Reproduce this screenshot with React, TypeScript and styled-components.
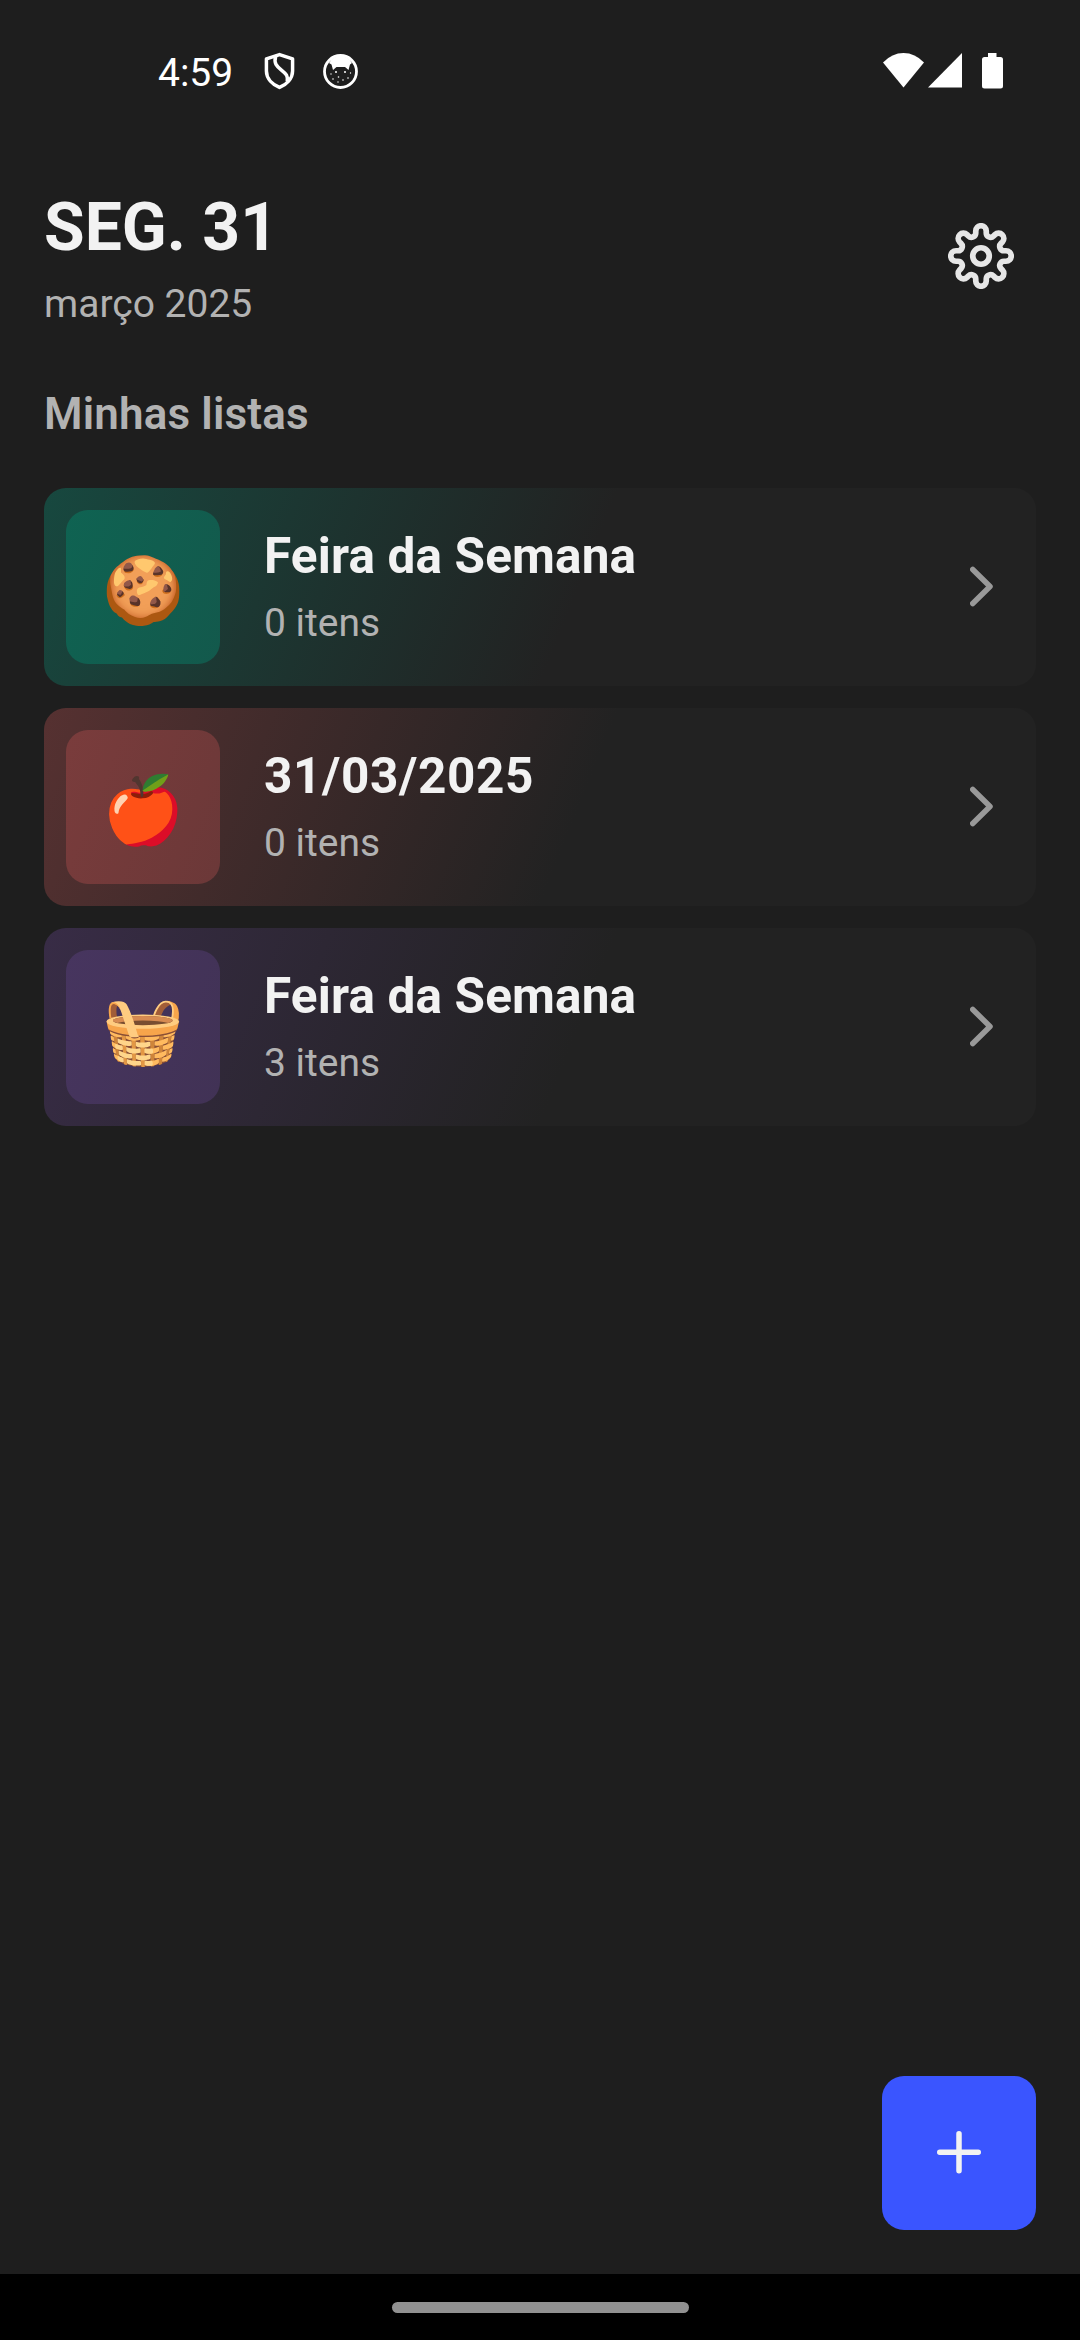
import React from "react";
import styled, { createGlobalStyle } from "styled-components";

const GlobalStyle = createGlobalStyle`
  * { box-sizing: border-box; }
  body { margin: 0; background: #1e1e1e; }
`;

const Screen = styled.div`
  width: 1080px;
  height: 2340px;
  display: flex;
  flex-direction: column;
  background: #1e1e1e;
  color: #f2f2f2;
  font-family: Roboto, "Liberation Sans", sans-serif;
  overflow: hidden;
`;

const StatusBar = styled.div`
  height: 143px;
  padding: 0 76px 2px 158px;
  display: flex;
  align-items: center;
  justify-content: space-between;
  color: #fff;
`;

const StatusGroup = styled.div<{ $gap: number }>`
  display: flex;
  align-items: center;
  gap: ${(p) => p.$gap}px;
`;

const Clock = styled.span`
  font-size: 39px;
  line-height: 45px;
  margin-right: 3px;
  padding-top: 6px;
`;

const BatteryIcon = styled.svg`
  margin-left: 16px;
`;

const Header = styled.header`
  display: flex;
  justify-content: space-between;
  align-items: center;
  padding: 45px 66px 0 44px;
`;

const Day = styled.h1`
  margin: 0;
  font-size: 66px;
  line-height: 80px;
  font-weight: 700;
`;

const Month = styled.p`
  margin: 13px 0 0;
  font-size: 39px;
  line-height: 46px;
  color: #b2b2b2;
`;

const GearIcon = styled.svg`
  margin-bottom: 3px;
`;

const SectionTitle = styled.h2`
  margin: 61px 44px 48px;
  font-size: 44px;
  line-height: 52px;
  font-weight: 600;
  letter-spacing: 0.15px;
  color: #b2b2b2;
`;

const Lists = styled.main`
  flex: 1;
  display: flex;
  flex-direction: column;
  gap: 22px;
  padding: 0 44px;
`;

const Card = styled.article<{ $tint: string }>`
  height: 198px;
  padding: 22px 42px 22px 22px;
  display: flex;
  align-items: center;
  gap: 44px;
  border-radius: 22px;
  background: linear-gradient(111.8deg, ${(p) => p.$tint} 0, #222222 534px);
`;

const Tile = styled.div<{ $from: string; $to: string }>`
  width: 154px;
  height: 154px;
  flex: none;
  display: flex;
  align-items: center;
  justify-content: center;
  border-radius: 22px;
  background: linear-gradient(111.8deg, ${(p) => p.$from}, ${(p) => p.$to});
`;

const Emoji = styled.span`
  padding: 7px 0 0 1px;
  font-size: 66px;
  line-height: 80px;
  font-family: "Noto Color Emoji", Roboto, sans-serif;
`;

const CardText = styled.div`
  flex: 1;
  padding-bottom: 2px;
`;

const Name = styled.h3<{ $spacing: number }>`
  margin: 0;
  font-size: 49.5px;
  line-height: 58px;
  font-weight: 700;
  letter-spacing: ${(p) => p.$spacing}px;
`;

const Count = styled.p`
  margin: 15px 0 0;
  font-size: 39px;
  line-height: 46px;
  color: #b2b2b2;
`;

const Footer = styled.footer`
  display: flex;
  justify-content: flex-end;
  padding: 0 44px 44px;
`;

const AddButton = styled.button`
  width: 154px;
  height: 154px;
  padding: 0;
  border: 0;
  border-radius: 22px;
  background: #3a55ff;
  display: flex;
  align-items: center;
  justify-content: center;
`;

const NavBar = styled.div`
  height: 66px;
  background: #000;
  display: flex;
  align-items: center;
  justify-content: center;
`;

const Pill = styled.div`
  width: 297px;
  height: 11px;
  border-radius: 6px;
  background: #919191;
`;

// Eight rounded lobes joined by round valleys, centred in a 66px box.
const gearPath = () => {
  const lobe = 5.25;
  const valley = 4.3;
  const at = (x: number, y: number, k: number) => {
    const t = (k * Math.PI) / 4;
    const px = 33 + x * Math.cos(t) - y * Math.sin(t);
    const py = 33 + x * Math.sin(t) + y * Math.cos(t);
    return `${px.toFixed(2)} ${py.toFixed(2)}`;
  };
  let d = `M${at(-lobe, -23.1, 0)}`;
  for (let k = 0; k < 8; k++) {
    d += `L${at(-lobe, -25, k)}A${lobe} ${lobe} 0 0 1 ${at(lobe, -25, k)}`;
    d += `L${at(lobe, -23.1, k)}A${valley} ${valley} 0 0 0 ${at(-lobe, -23.1, k + 1)}`;
  }
  return d + "Z";
};

const Gear = () => (
  <GearIcon width="66" height="66" viewBox="0 0 66 66" fill="none" stroke="#e6e6e6" strokeWidth="5.7">
    <path d={gearPath()} strokeLinejoin="round" />
    <circle cx="33" cy="33" r="8.25" />
  </GearIcon>
);

const Chevron = () => (
  <svg width="24" height="44" viewBox="0 0 24 44" fill="none" stroke="#999" strokeWidth="5.5" strokeLinecap="round" strokeLinejoin="round">
    <path d="M2.750 4.500 20 21.500 2.750 38.500" />
  </svg>
);

const lists = [
  { emoji: "🍪", name: "Feira da Semana", count: "0 itens", spacing: 0.14, tint: "#17483f", from: "#0f6352", to: "#13594c" },
  { emoji: "🍎", name: "31/03/2025", count: "0 itens", spacing: 0.6, tint: "#563131", from: "#7a3c3c", to: "#6b3838" },
  { emoji: "🧺", name: "Feira da Semana", count: "3 itens", spacing: 0.14, tint: "#382c46", from: "#47355f", to: "#413255" },
];

export default function App() {
  return (
    <Screen>
      <GlobalStyle />
      <StatusBar>
        <StatusGroup $gap={28}>
          <Clock>4:59</Clock>
          <svg width="31" height="38" viewBox="0 0 32 38" fill="none" stroke="#fff" strokeWidth="3.600" strokeLinejoin="round">
            <path d="M16 2 29.500 6.500V19C29.500 27 23 33 16 36 9 33 2.500 27 2.500 19V6.500Z" />
            <path d="M12 4C10 11 13 14 18 18 23 22 25 24 24 30" />
          </svg>
          <svg width="36" height="36" viewBox="0 -1 36 36">
            <circle cx="17.500" cy="17.500" r="16" fill="none" stroke="#fff" strokeWidth="2.800" />
            <path d="M6 9Q10 2 17.500 2T29 9L27 10.500 25.500 16 22 13H13.500L10 16 8.500 10.500Z" fill="#fff" />
            <g fill="#fff">
              <circle cx="13" cy="18" r="1" />
              <circle cx="22" cy="18" r="1" />
              <circle cx="8" cy="20" r=".7" />
              <circle cx="27.500" cy="19" r=".7" />
              <circle cx="10" cy="25" r=".8" />
              <circle cx="15.500" cy="23" r=".8" />
              <circle cx="20" cy="26" r=".8" />
              <circle cx="25" cy="24" r=".8" />
              <circle cx="15" cy="28" r=".7" />
            </g>
          </svg>
        </StatusGroup>
        <StatusGroup $gap={4}>
          <svg width="41" height="36" viewBox="0 0 41 36">
            <path d="M0 9.500Q9 0 20.500 0T41 9.500L20.500 34.500Z" fill="#fff" />
          </svg>
          <svg width="34" height="36" viewBox="0 0 34 36">
            <path d="M34 0V34.500H0Z" fill="#fff" />
          </svg>
          <BatteryIcon width="22" height="36" viewBox="0 0 22 36">
            <path d="M6 0H14.500V4H18.500Q21 4 21 6.500V33Q21 35.500 18.500 35.500H2.500Q0 35.500 0 33V6.500Q0 4 2.500 4H6Z" fill="#fff" />
          </BatteryIcon>
        </StatusGroup>
      </StatusBar>
      <Header>
        <div>
          <Day>SEG. 31</Day>
          <Month>março 2025</Month>
        </div>
        <Gear />
      </Header>
      <SectionTitle>Minhas listas</SectionTitle>
      <Lists>
        {lists.map((l, i) => (
          <Card key={i} $tint={l.tint}>
            <Tile $from={l.from} $to={l.to}>
              <Emoji>{l.emoji}</Emoji>
            </Tile>
            <CardText>
              <Name $spacing={l.spacing}>{l.name}</Name>
              <Count>{l.count}</Count>
            </CardText>
            <Chevron />
          </Card>
        ))}
      </Lists>
      <Footer>
        <AddButton aria-label="Adicionar">
          <svg width="44" height="44" viewBox="0 0 44 44" stroke="#f2f2f2" strokeWidth="5.500" strokeLinecap="round">
            <path d="M22 2.750V39.750M2.750 21.250H41.250" />
          </svg>
        </AddButton>
      </Footer>
      <NavBar>
        <Pill />
      </NavBar>
    </Screen>
  );
}
